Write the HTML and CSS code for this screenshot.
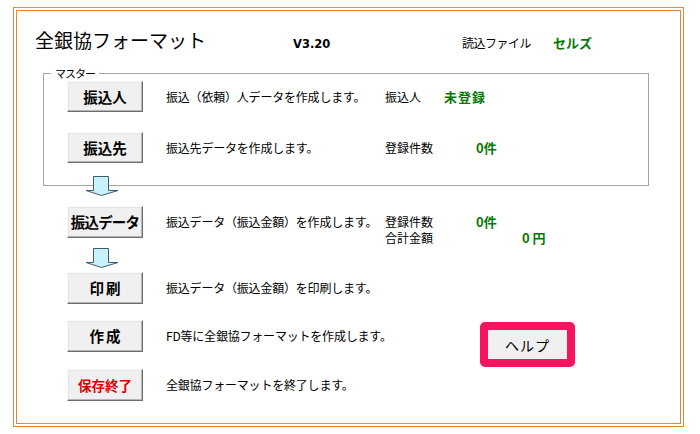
FILE: index.html
```html
<!DOCTYPE html>
<html lang="ja">
<head>
<meta charset="utf-8">
<title>全銀協フォーマット</title>
<link rel="stylesheet" href="styles.css">
</head>
<body>
<div class="frame">
  <div class="header">
    <span class="title">全銀協フォーマット</span>
    <span class="version">V3.20</span>
    <span class="file-label">読込ファイル</span>
    <span class="file-value green">セルズ</span>
  </div>

  <div class="group">
    <span class="group-label">マスター</span>
    <div class="row">
      <div class="btn">振込人</div>
      <span class="desc">振込（依頼）人データを作成します。</span>
      <span class="label w59">振込人</span>
      <span class="value green spaced">未登録</span>
    </div>
    <div class="row row-gap">
      <div class="btn">振込先</div>
      <span class="desc">振込先データを作成します。</span>
      <span class="label w91">登録件数</span>
      <span class="value green">0件</span>
    </div>
  </div>

  <div class="arrow arrow-first">
    <svg width="34" height="20" viewBox="0 0 34 20"><path d="M8.5 0.5 H23.5 V14.5 H33 L16.5 19.5 L1 14.5 H8.5 Z" fill="#c8f2fa" stroke="#3f5f6c" stroke-width="1"/></svg>
  </div>

  <div class="row row-top outer">
    <div class="btn tight">振込データ</div>
    <span class="desc desc-top">振込データ（振込金額）を作成します。</span>
    <div class="info">
      <div class="info-line"><span class="label w91">登録件数</span><span class="value green">0件</span></div>
      <div class="info-line"><span class="label w137">合計金額</span><span class="value green">0&nbsp;円</span></div>
    </div>
  </div>

  <div class="arrow arrow-second">
    <svg width="34" height="20" viewBox="0 0 34 20"><path d="M8.5 0.5 H23.5 V14.5 H33 L16.5 19.5 L1 14.5 H8.5 Z" fill="#c8f2fa" stroke="#3f5f6c" stroke-width="1"/></svg>
  </div>

  <div class="row outer print-row">
    <div class="btn wide">印刷</div>
    <span class="desc">振込データ（振込金額）を印刷します。</span>
  </div>

  <div class="row outer make-row">
    <div class="btn wide">作成</div>
    <span class="desc">FD等に全銀協フォーマットを作成します。</span>
    <div class="help"><div class="help-inner">ヘルプ</div></div>
  </div>

  <div class="row outer exit-row">
    <div class="btn red">保存終了</div>
    <span class="desc">全銀協フォーマットを終了します。</span>
  </div>
</div>
</body>
</html>
```

FILE: styles.css
```css
html, body {
  margin: 0;
  padding: 0;
  background: #ffffff;
}

body {
  font-family: "Noto Sans CJK JP", "Noto Sans", sans-serif;
  color: #000;
  font-size: 12px;
}

.frame {
  box-sizing: border-box;
  margin: 7px 0 0 13px;
  width: 671px;
  height: 420px;
  border: 4px double #e0883c;
  display: flex;
  flex-direction: column;
  align-items: flex-start;
}

.header {
  display: flex;
  align-items: baseline;
  margin-top: 17px;
  padding-left: 18px;
  height: 24px;
}

.title {
  width: 258px;
  font-size: 19px;
  line-height: 24px;
  font-weight: 400;
}

.version {
  width: 169px;
  font-family: "DejaVu Sans", sans-serif;
  font-weight: bold;
  font-size: 11.5px;
}

.file-label {
  width: 91px;
  font-size: 12px;
  letter-spacing: -0.5px;
}

.file-value {
  font-size: 13px;
  font-weight: bold;
}

.green {
  color: #067806;
}

.group {
  position: relative;
  box-sizing: border-box;
  margin: 21px 0 0 26px;
  width: 606px;
  padding: 7px 0 22px 23px;
  border: 1px solid #a3a3a3;
}

.group-label {
  position: absolute;
  top: -8px;
  left: 7px;
  padding: 0 4px;
  background: #fff;
  font-size: 11px;
  line-height: 14px;
  letter-spacing: -1px;
}

.row {
  display: flex;
  align-items: center;
  height: 31px;
}

.row-gap {
  margin-top: 20px;
}

.outer {
  margin-left: 50px;
}

.row-top {
  align-items: flex-start;
  margin-top: 10px;
  height: 32px;
}

.btn {
  box-sizing: border-box;
  width: 76px;
  height: 31px;
  flex: none;
  display: flex;
  align-items: center;
  justify-content: center;
  background: #f0f0f0;
  border: 1px solid;
  border-color: #fbfbfb #6e6e6e #6e6e6e #fbfbfb;
  box-shadow: inset -1px -1px 0 #b4b4b4, inset 1px 1px 0 #e6e6e6;
  font-size: 14.5px;
  font-weight: bold;
  line-height: 18px;
}

.row-top .btn,
.print-row .btn,
.make-row .btn,
.exit-row .btn {
  height: 32px;
}

.btn.tight {
  letter-spacing: -0.8px;
}

.btn.wide {
  letter-spacing: 2px;
  padding-left: 2px;
}

.btn.red {
  color: #e00000;
  font-size: 13.5px;
}

.desc {
  margin-left: 23px;
  width: 219px;
  flex: none;
  font-size: 12px;
  line-height: 16px;
  letter-spacing: -0.2px;
  white-space: nowrap;
}

.desc-top {
  margin-top: 8px;
}

.label {
  flex: none;
  font-size: 12px;
  line-height: 16px;
  white-space: nowrap;
}

.w59 { width: 59px; }
.w91 { width: 91px; }
.w137 { width: 137px; }

.value {
  font-size: 13px;
  font-weight: bold;
  line-height: 16px;
  white-space: nowrap;
}

.spaced {
  letter-spacing: 1px;
}

.info {
  margin-top: 8px;
  margin-bottom: -8px;
  display: flex;
  flex-direction: column;
}

.info-line {
  display: flex;
  align-items: center;
  height: 16px;
}

.arrow {
  margin-left: 68px;
  height: 20px;
  line-height: 0;
}

.arrow-first {
  margin-top: -10px;
  position: relative;
}

.arrow-second {
  margin-top: 10px;
}

.print-row {
  margin-top: 4px;
  height: 32px;
}

.make-row {
  margin-top: 16px;
  height: 32px;
  align-items: center;
}

.exit-row {
  margin-top: 17px;
  height: 32px;
}

.help {
  align-self: flex-start;
  margin: 2px 0 -15px 95px;
  box-sizing: border-box;
  width: 95px;
  height: 45px;
  border: 8px solid #f8145e;
  border-radius: 5px;
  background: #f8145e;
}

.help-inner {
  height: 100%;
  background: #f0f0f0;
  display: flex;
  align-items: center;
  justify-content: center;
  font-size: 14px;
  letter-spacing: 1px;
}
```
